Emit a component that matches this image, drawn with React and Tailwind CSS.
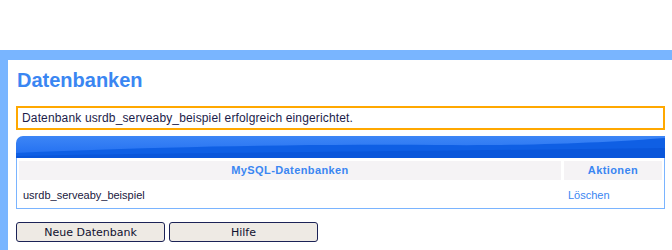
import React from "react";

const HeaderWave = () => (
  <svg
    className="block w-full h-[22px] rounded-tl-[7px]"
    viewBox="0 0 650 22"
    preserveAspectRatio="none"
  >
    <defs>
      <linearGradient id="hdr" x1="0" y1="0" x2="0" y2="1">
        <stop offset="0" stopColor="#3d86f6" />
        <stop offset="1" stopColor="#1f6cf0" />
      </linearGradient>
    </defs>
    <rect width="650" height="22" fill="url(#hdr)" />
    <path
      d="M0 22 L0 17 C120 12 260 8 420 9 C520 10 600 6 650 2 L650 22 Z"
      fill="#0f5fe4"
    />
    <path
      d="M0 22 L0 20 C160 17 340 16 650 12 L650 22 Z"
      fill="#0a56da"
    />
  </svg>
);

const Button = ({ label }) => (
  <button className="w-[149px] h-[20px] rounded-[3px] border border-[#1b2256] bg-[#eeeae4] text-[11px] leading-none text-[#101030] font-['DejaVu_Sans',sans-serif]">
    {label}
  </button>
);

export default function App() {
  return (
    <div className="w-[672px] h-[250px] bg-white overflow-hidden font-['Liberation_Sans',Arial,sans-serif]">
      <div className="h-[50px]" />
      <div className="h-[10px] bg-[#79b5ff]" />
      <div className="flex h-[190px]">
        <div className="w-[8px] bg-[#79b5ff]" />
        <div className="flex-1 pl-[8px] pr-[7px]">
          <h1 className="pt-[8px] pl-[1px] text-[20px] leading-[24px] font-bold text-[#3a86f2]">
            Datenbanken
          </h1>

          <div className="mt-[14px] h-[24px] border-2 border-[#ffa800] px-[4px] text-[12px] tracking-[0.15px] leading-[20px] text-[#1c1c4a]">
            Datenbank usrdb_serveaby_beispiel erfolgreich eingerichtet.
          </div>

          <div className="mt-[6px]">
            <HeaderWave />
            <div className="border-x border-b border-[#7ab4ff]">
              <div className="grid grid-cols-[1fr_98px] gap-x-[3px] px-[2px] py-[3px]">
                <div className="h-[19px] bg-[#f5f3f5] text-center text-[11px] leading-[19px] font-bold tracking-[0.4px] text-[#3a86f2]">
                  MySQL-Datenbanken
                </div>
                <div className="h-[19px] bg-[#f5f3f5] text-center text-[11px] leading-[19px] font-bold tracking-[0.4px] text-[#3a86f2]">
                  Aktionen
                </div>
              </div>
              <div className="grid grid-cols-[1fr_98px] gap-x-[3px] px-[2px] h-[25px] items-center text-[11px]">
                <div className="pl-[4px] text-[#202040]">usrdb_serveaby_beispiel</div>
                <div className="pl-[4px] text-[#3a86f2]">Löschen</div>
              </div>
            </div>
          </div>

          <div className="mt-[13px] flex gap-[4px]">
            <Button label="Neue Datenbank" />
            <Button label="Hilfe" />
          </div>
        </div>
      </div>
    </div>
  );
}
